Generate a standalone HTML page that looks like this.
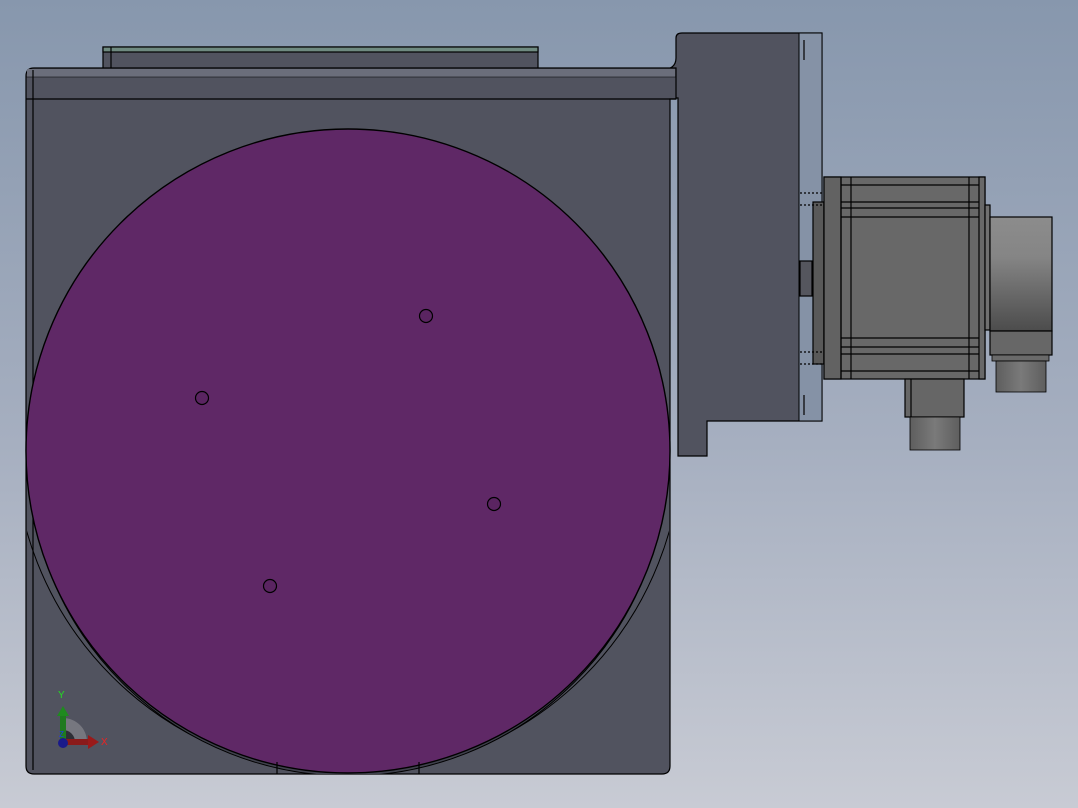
<!DOCTYPE html>
<html><head><style>
html,body{margin:0;padding:0;width:1078px;height:808px;overflow:hidden}
body{background:linear-gradient(to bottom,#8797ad 0%,#a6afc0 55%,#c8cbd4 100%)}
svg{position:absolute;left:0;top:0}
</style></head><body>
<svg width="1078" height="808" viewBox="0 0 1078 808" font-family="Liberation Sans, sans-serif">
<defs>
<linearGradient id="enc" x1="0" y1="0" x2="0" y2="1">
<stop offset="0" stop-color="#8c8c8c"/><stop offset="0.35" stop-color="#858585"/><stop offset="1" stop-color="#4c4c4c"/></linearGradient>
<linearGradient id="conn" x1="0" y1="0" x2="1" y2="0">
<stop offset="0" stop-color="#5e5e5e"/><stop offset="0.5" stop-color="#7a7a7a"/><stop offset="1" stop-color="#5e5e5e"/></linearGradient>
<clipPath id="low"><rect x="27" y="470" width="642" height="304"/></clipPath>
</defs>
<g stroke="#000" stroke-width="1.2">
<path d="M660 70 Q676 70 676 58 L676 38 Q676 33 682 33 L822 33 L822 421 L707 421 L707 456 L678 456 L678 98 L660 98 Z" fill="#51535f"/>
<rect x="799" y="33" width="23" height="388" fill="#8592a6" stroke-width="1"/>
<line x1="804" y1="40" x2="804" y2="60"/><line x1="804" y1="395" x2="804" y2="415"/>
<rect x="103" y="47" width="435" height="22" fill="#51535f"/>
<rect x="103" y="47" width="435" height="5" fill="#6f8a80"/>
<line x1="111" y1="47" x2="111" y2="69"/>
<path d="M34 68 L676 68 L676 99 L670 99 L670 766 Q670 774 662 774 L34 774 Q26 774 26 766 L26 76 Q26 68 34 68 Z" fill="#51535f"/>
<rect x="27" y="69" width="648" height="8" fill="#6b6e7b" stroke="none"/>
<line x1="26" y1="99" x2="676" y2="99"/>
<line x1="33" y1="70" x2="33" y2="770"/>
<line x1="26" y1="77" x2="676" y2="77" stroke-width="0.6"/>
<g clip-path="url(#low)">
<circle cx="348" cy="440" r="334" fill="none" stroke-width="1"/>
<circle cx="348" cy="456" r="320" fill="#3f414c" stroke-width="1"/>
</g>
<circle cx="348" cy="451" r="322" fill="#5f2866" stroke-width="1.4"/>
<line x1="277" y1="762" x2="277" y2="774"/><line x1="419" y1="762" x2="419" y2="774"/>
<circle cx="426" cy="316" r="6.5" fill="#5a2461"/>
<circle cx="202" cy="398" r="6.5" fill="#5a2461"/>
<circle cx="494" cy="504" r="6.5" fill="#5a2461"/>
<circle cx="270" cy="586" r="6.5" fill="#5a2461"/>
<rect x="800" y="261" width="12" height="35" fill="#55565e"/>
<rect x="813" y="202" width="11" height="162" fill="#595959"/>
<line x1="800" y1="193" x2="824" y2="193" stroke-dasharray="2 2"/>
<line x1="800" y1="205" x2="824" y2="205" stroke-dasharray="2 2"/>
<line x1="800" y1="352" x2="824" y2="352" stroke-dasharray="2 2"/>
<line x1="800" y1="364" x2="824" y2="364" stroke-dasharray="2 2"/>
<rect x="824" y="177" width="161" height="202" fill="#686868"/>
<rect x="824" y="177" width="17" height="202" fill="#626262"/>
<line x1="841" y1="177" x2="841" y2="379"/>
<line x1="851" y1="177" x2="851" y2="379"/>
<line x1="969" y1="177" x2="969" y2="379"/>
<line x1="841" y1="185" x2="985" y2="185"/>
<line x1="841" y1="202" x2="985" y2="202"/>
<line x1="841" y1="208" x2="985" y2="208"/>
<line x1="841" y1="217" x2="985" y2="217"/>
<line x1="841" y1="338" x2="985" y2="338"/>
<line x1="841" y1="347" x2="985" y2="347"/>
<line x1="841" y1="354" x2="985" y2="354"/>
<line x1="841" y1="371" x2="985" y2="371"/>
<rect x="979" y="177" width="6" height="202" fill="#686868"/>
<rect x="905" y="379" width="59" height="38" fill="#666"/>
<line x1="911" y1="379" x2="911" y2="417"/>
<rect x="910" y="417" width="50" height="33" fill="url(#conn)" stroke-width="0.8"/>
<rect x="985" y="205" width="5" height="125" fill="#707070"/>
<rect x="990" y="217" width="62" height="114" fill="url(#enc)"/>
<rect x="990" y="331" width="62" height="24" fill="#676767"/>
<rect x="992" y="355" width="57" height="6" fill="#6a6a6a" stroke-width="0.8"/>
<rect x="996" y="361" width="50" height="31" fill="url(#conn)" stroke-width="0.8"/>
</g>
<path d="M63 738 L63 718 A24 24 0 0 1 87 742 L63 742 Z" fill="#76777f"/>
<path d="M63 738 L63 730 A12 12 0 0 1 75 742 L63 742 Z" fill="#2e2f36"/>
<rect x="60" y="714" width="6" height="28" fill="#1f7a1f"/>
<path d="M57 716 L63 706 L69 716 Z" fill="#1f8a1f"/>
<rect x="63" y="739" width="26" height="6" fill="#8a1a1a"/>
<path d="M88 735 L99 742 L88 749 Z" fill="#9a1a1a"/>
<circle cx="63" cy="743" r="5" fill="#1a1a8a"/>
<text x="58" y="698" font-size="10" fill="#22dd22">Y</text>
<text x="101" y="745" font-size="10" fill="#ee2222">X</text>
<text x="59" y="737" font-size="8" fill="#2233ee">Z</text>
</svg>
</body></html>
